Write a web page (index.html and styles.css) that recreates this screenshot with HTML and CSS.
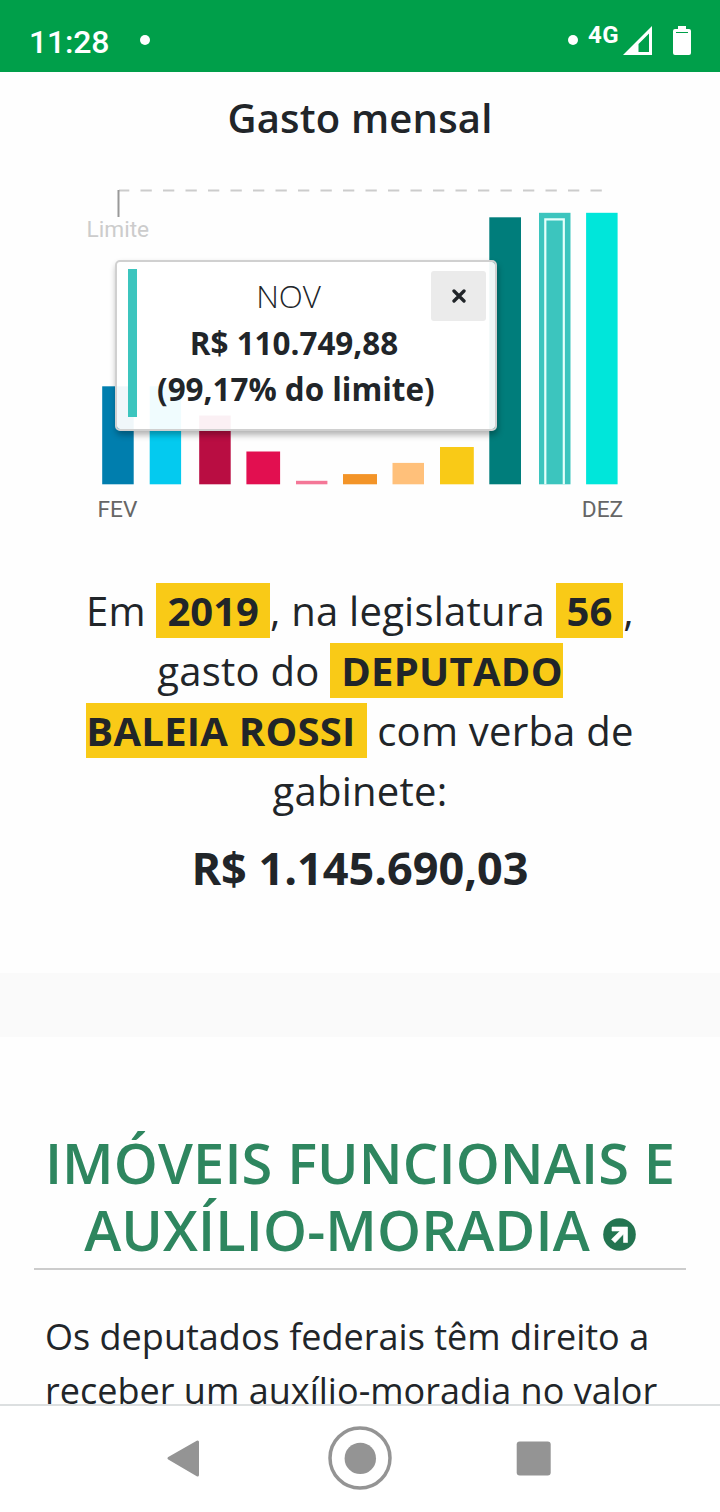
FILE: index.html
```html
<!DOCTYPE html>
<html lang="pt-BR">
<head>
<meta charset="utf-8">
<title>Gasto mensal</title>
<link rel="stylesheet" href="styles.css">
</head>
<body>
<div class="screen">
  <header class="status">
    <span class="clock">11:28</span>
    <i class="dot"></i>
    <i class="dot dot-right"></i>
    <span class="network">4G</span>
    <svg class="signal" width="29" height="29" viewBox="0 0 29 29"><path fill="#fff" fill-rule="evenodd" d="M29 0V29H0ZM26 7.5L15.5 18V26H26Z"/></svg>
    <svg class="battery" width="18" height="29" viewBox="0 0 18 29"><path fill="#fff" d="M5 0h8v3h3q2 0 2 2v22q0 2-2 2H2q-2 0-2-2V5q0-2 2-2h3z"/><path fill="#009f4a" d="M3 6h12v1H3z"/></svg>
  </header>
  <main class="content">
    <section class="spending">
      <h2 class="chart-title">Gasto mensal</h2>
      <div class="chart">
        <svg class="plot" width="560" height="360" viewBox="80 170 560 360">
          <path d="M119 190.5H602" stroke="#ccc" stroke-width="2" stroke-dasharray="11.3 11.2" stroke-dashoffset="1"/>
          <path d="M118.5 190v27" stroke="#999" stroke-width="2"/>
          <text class="limit" x="86.5" y="237">Limite</text>
          <g>
            <rect x="102.2" y="386.3" width="31.5" height="98" fill="#007eae"/>
            <rect x="149.7" y="386.3" width="31.4" height="98" fill="#04caef"/>
            <rect x="199.2" y="415.5" width="31.5" height="68.8" fill="#b90d42"/>
            <rect x="246.4" y="451.5" width="33.7" height="32.8" fill="#e20f50"/>
            <rect x="296" y="480.8" width="31.4" height="3.5" fill="#f47797"/>
            <rect x="343" y="474.1" width="34" height="10.2" fill="#f39428"/>
            <rect x="392.5" y="462.9" width="31.5" height="21.4" fill="#ffc07a"/>
            <rect x="440" y="447" width="33.8" height="37.3" fill="#f9ca17"/>
            <rect x="489.3" y="217.3" width="31.7" height="267" fill="#007d7b"/>
            <rect x="539" y="212.8" width="31.5" height="271.5" fill="#3cc5be"/>
            <path d="M545.3 484.3V219.3H563.8V484.3" fill="none" stroke="#e5fffb" stroke-width="2.2"/>
            <rect x="586.1" y="212.8" width="31.5" height="271.5" fill="#00e6da"/>
          </g>
          <text class="month" x="97.5" y="517">FEV</text>
          <text class="month" x="581.8" y="517">DEZ</text>
        </svg>
        <div class="tooltip">
          <div class="tooltip-text">
            <div class="tooltip-month">NOV</div>
            <b>R$ 110.749,88</b><br><b>(99,17% do limite)</b>
          </div>
          <button class="close" aria-label="Fechar"><svg width="14" height="14" viewBox="0 0 14 14"><path d="M2 2l10 10M12 2L2 12" stroke="#212529" stroke-width="3.3" stroke-linecap="round"/></svg></button>
        </div>
      </div>
      <p class="summary">Em <mark class="number">2019</mark>, na legislatura <mark class="number">56</mark>,<br>gasto do <mark class="pad-l">DEPUTADO</mark><br><mark class="pad-r">BALEIA ROSSI</mark> com verba de<br>gabinete:</p>
      <p class="total">R$ 1.145.690,03</p>
    </section>
    <section class="housing">
      <h1 class="heading"><span>IMÓVEIS FUNCIONAIS E</span><br><span>AUXÍLIO-MORADIA</span><svg class="arrow" width="33" height="33" viewBox="0 0 33 33"><circle cx="16.5" cy="16.5" r="16.3" fill="#237450"/><path d="M9 9h15.5v15.5h-4V16L12 24.8l-3.5-3.5L17 13H9z" fill="#fff" stroke="#fff" stroke-width=".6" stroke-linejoin="round"/></svg></h1>
      <p class="description">Os deputados federais têm direito a<br>receber um auxílio-moradia no valor</p>
    </section>
  </main>
  <nav class="navbar">
    <svg width="720" height="106" viewBox="0 1406 720 106" fill="#949494">
      <path d="M169 1458.3L197.500 1442V1475Z" stroke="#949494" stroke-width="3" stroke-linejoin="round"/>
      <circle cx="360" cy="1458" r="30" fill="none" stroke="#949494" stroke-width="3.500"/>
      <circle cx="360.300" cy="1458.400" r="15.700"/>
      <rect x="516.700" y="1441.600" width="34" height="34" rx="3"/>
    </svg>
  </nav>
</div>
</body>
</html>
```
FILE: styles.css
```css
* { box-sizing: border-box; }
body { margin: 0; background: #fefefe; color: #212529; font-family: "Open Sans", sans-serif; }
h1, h2, p { margin: 0; font-weight: 400; }
.screen { display: flex; flex-direction: column; height: 1512px; overflow: hidden; }
.status { display: flex; flex: none; align-items: flex-start; height: 72px; padding-left: 29px; background: #009f4a; color: #fff; font-family: Roboto, sans-serif; }
.clock { width: 111px; padding-top: 23px; font-size: 32px; line-height: 38px; font-weight: 500; letter-spacing: -0.2px; white-space: nowrap; }
.dot { width: 10px; height: 10px; margin-top: 35px; border-radius: 50%; background: #fff; }
.dot-right { margin-left: 418px; }
.network { width: 45px; padding: 21px 0 0 10px; font-size: 24px; line-height: 28px; font-weight: 700; letter-spacing: 0.5px; }
.signal { margin-top: 26px; }
.battery { margin: 26px 0 0 21px; }
.content { flex: 1; min-height: 0; overflow: hidden; }
.spending { height: 901px; text-align: center; }
.chart-title { height: 98px; padding-top: 16px; font-size: 40px; line-height: 60px; font-weight: 600; letter-spacing: 0.2px; }
.chart { position: relative; height: 360px; padding-left: 80px; }
.plot { display: block; font-family: Roboto, sans-serif; font-size: 22.7px; }
.limit { fill: #ccc; }
.month { fill: #666; }
.tooltip { position: absolute; left: 115px; top: 90px; display: flex; width: 382px; height: 171px; padding: 7px 9px 12px 11px; border: 2px solid #d0d0d0; border-radius: 5px; background: rgba(255, 255, 255, .94); background-clip: padding-box; box-shadow: 1px 4px 6px rgba(0, 0, 0, .3); }
.tooltip-text { width: 303px; height: 148px; padding: 4px 0 0 9px; border-left: 9px solid #3cc5be; font-size: 31.4px; line-height: 46.7px; white-space: nowrap; }
.tooltip-text b { margin-left: 11px; }
.tooltip-month { font-weight: 300; }
.close { display: flex; align-items: center; justify-content: center; width: 55px; height: 50px; margin-top: 2px; padding: 0; border: 0; border-radius: 3px; background: #ebebeb; }
.summary { height: 240px; margin-top: 51px; font-size: 40px; line-height: 60px; letter-spacing: 0.25px; white-space: nowrap; }
.summary mark { background: #f9ca17; color: #212529; font-weight: 700; }
.number { padding: 0 11px; letter-spacing: 0; }
.pad-l { padding-left: 11px; }
.pad-r { padding-right: 11px; }
.total { margin-top: 13px; font-size: 45px; line-height: 68px; font-weight: 700; }
.housing { padding: 92px 34px 0; border-top: 64px solid #fafafa; }
.heading { height: 141px; border-bottom: 2px solid #ccc; color: #2e865f; text-align: center; font-size: 56px; line-height: 67px; font-weight: 600; letter-spacing: 0.12px; white-space: nowrap; }
.arrow { margin-left: 13px; vertical-align: 0; }
.description { margin-top: 40px; padding-left: 11px; font-size: 36px; line-height: 54px; letter-spacing: 0.02px; white-space: nowrap; }
.navbar { flex: none; height: 108px; border-top: 2px solid #dcdfe0; background: #fff; }
.navbar svg { display: block; }
```
